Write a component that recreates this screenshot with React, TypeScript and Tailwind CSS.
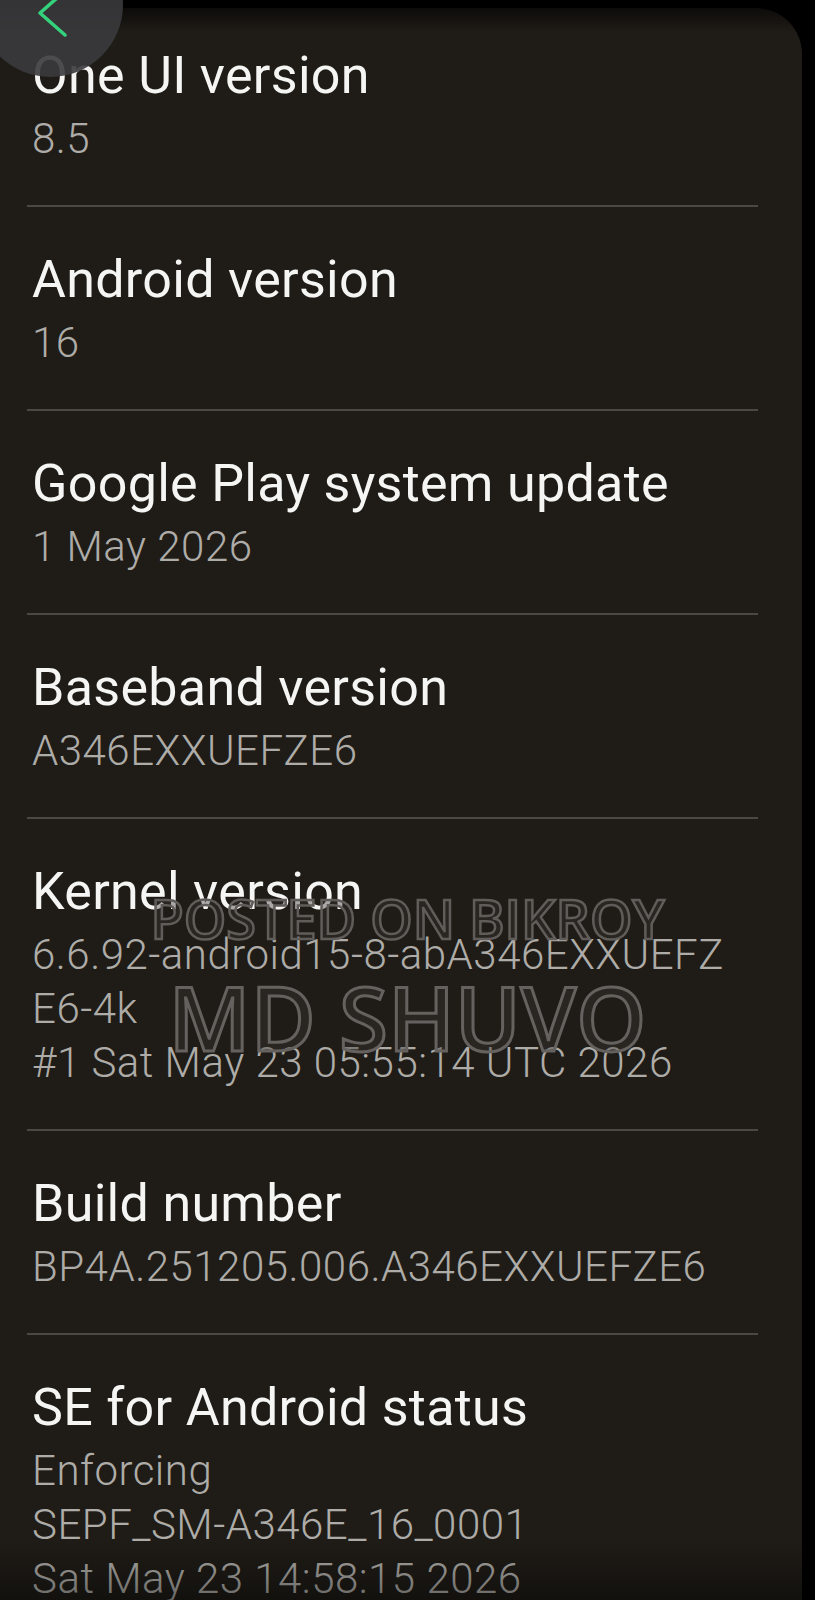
const items: { title: string; lines: string[] }[] = [
  { title: 'One UI version', lines: ['8.5'] },
  { title: 'Android version', lines: ['16'] },
  { title: 'Google Play system update', lines: ['1 May 2026'] },
  { title: 'Baseband version', lines: ['A346EXXUEFZE6'] },
  {
    title: 'Kernel version',
    lines: ['6.6.92-android15-8-abA346EXXUEFZ', 'E6-4k', '#1 Sat May 23 05:55:14 UTC 2026'],
  },
  { title: 'Build number', lines: ['BP4A.251205.006.A346EXXUEFZE6'] },
  {
    title: 'SE for Android status',
    lines: ['Enforcing', 'SEPF_SM-A346E_16_0001', 'Sat May 23 14:58:15 2026'],
  },
];

function InfoRow({ title, lines, first }: { title: string; lines: string[]; first: boolean }) {
  return (
    <div className={first ? 'pt-[38px] pb-[39px] pl-[32px]' : 'pt-[43px] pb-[39px] pl-[32px]'}>
      <div className="text-[52px] leading-[60px] tracking-[0.3px] text-[#f5f5f4] whitespace-nowrap">
        {title}
      </div>
      <div className="mt-[6px] text-[42px] leading-[54px] font-light tracking-[0.5px] text-[#aeaca8] whitespace-nowrap">
        {lines.map((l) => (
          <div key={l}>{l}</div>
        ))}
      </div>
    </div>
  );
}

export default function App() {
  return (
    <div className="relative h-[1600px] w-[815px] overflow-hidden bg-black font-['Roboto',sans-serif]">
      <div className="mt-[8px] mr-[13px] min-h-[1600px] rounded-tr-[46px] bg-[#1f1c17]">
        {items.map((item, i) => (
          <div key={item.title}>
            {i > 0 && <div className="ml-[27px] mr-[44px] h-[2px] bg-[#4a4744]" />}
            <InfoRow title={item.title} lines={item.lines} first={i === 0} />
          </div>
        ))}
      </div>

      {/* shading at the top and bottom edges */}
      <div className="pointer-events-none absolute left-0 right-0 top-0 h-[32px] bg-gradient-to-b from-black/80 to-transparent" />
      <div className="pointer-events-none absolute bottom-0 left-0 right-0 h-[60px] bg-gradient-to-t from-black/40 to-transparent" />

      {/* watermark */}
      <div className="pointer-events-none absolute left-0 right-0 top-[891px] text-center font-['Open_Sans',sans-serif] text-[54px] font-semibold leading-none text-[#3a3835]/40 [-webkit-text-stroke:2.5px_#5f5c59]">
        POSTED ON BIKROY
      </div>
      <div className="pointer-events-none absolute left-0 right-0 top-[972px] text-center font-['Open_Sans',sans-serif] text-[89px] font-semibold leading-none text-[#3a3835]/40 [-webkit-text-stroke:3px_#64615e]">
        MD SHUVO
      </div>

      {/* back button */}
      <button className="absolute left-[-22px] top-[-68px] h-[145px] w-[145px] rounded-full bg-[#3a3a3c]/[0.9]">
        <svg viewBox="0 0 145 145" className="h-full w-full" fill="none">
          <polyline
            points="87,59 62,81 87,103"
            stroke="#34d27c"
            strokeWidth="3.5"
            strokeLinecap="round"
            strokeLinejoin="round"
          />
        </svg>
      </button>
    </div>
  );
}
